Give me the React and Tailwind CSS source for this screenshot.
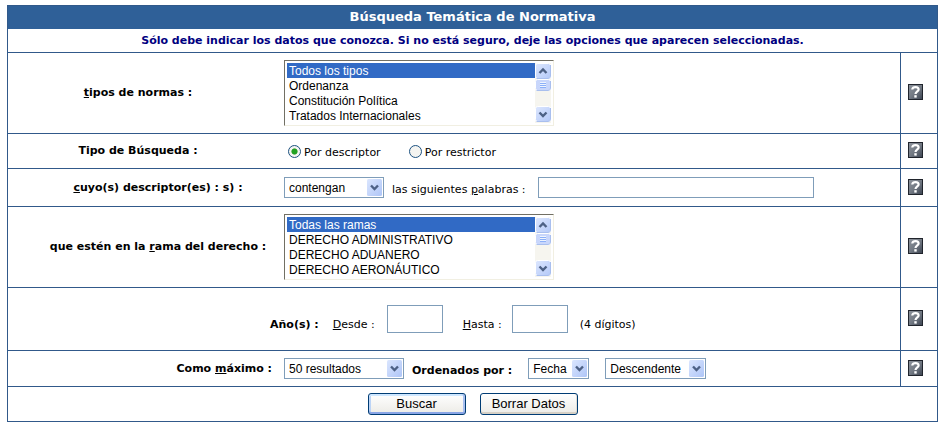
import clsx from "clsx";

const normTypes = [
  "Todos los tipos",
  "Ordenanza",
  "Constitución Política",
  "Tratados Internacionales",
];

const lawBranches = [
  "Todas las ramas",
  "DERECHO ADMINISTRATIVO",
  "DERECHO ADUANERO",
  "DERECHO AERONÁUTICO",
];

function HelpButton({ topic }) {
  return (
    <button type="button" aria-label={`Ayuda: ${topic}`} className="block cursor-pointer">
      <svg width="15" height="16" viewBox="0 0 15 16">
        <defs>
          <linearGradient id="helpFill" x1="0" y1="0" x2="1" y2="1">
            <stop offset="0" stopColor="#8d939c" />
            <stop offset="0.5" stopColor="#737a84" />
            <stop offset="1" stopColor="#3a4250" />
          </linearGradient>
        </defs>
        <rect x="0.5" y="0.5" width="14" height="15" fill="url(#helpFill)" stroke="#20242c" />
        <path
          d="M4.3 5.6C4.3 3.9 5.6 3.1 7.5 3.1C9.4 3.1 10.6 4 10.6 5.5C10.6 7.3 7.7 7.6 7.5 10"
          fill="none"
          stroke="#fff"
          strokeWidth="2.2"
        />
        <rect x="6.3" y="11.2" width="2.4" height="2.4" fill="#fff" />
      </svg>
    </button>
  );
}

// One line of the form, with the help column on the right
function Row({ topic, className, children }) {
  return (
    <div className="flex border-b border-[#31598a]">
      <div className={clsx("flex flex-1", className)}>{children}</div>
      <div className="flex w-[37px] items-center border-l border-[#31598a] pb-0.5 pl-[7px]">
        <HelpButton topic={topic} />
      </div>
    </div>
  );
}

function Label({ htmlFor, className, children }) {
  return (
    <div className={clsx("w-[276px] shrink-0 font-bold", className)}>
      <label htmlFor={htmlFor}>{children}</label>
    </div>
  );
}

function ScrollBar() {
  return (
    <svg width="16" height="60" viewBox="0 0 16 60" aria-hidden="true">
      <defs>
        <linearGradient id="scrollFill" x1="0" y1="0" x2="1" y2="1">
          <stop offset="0" stopColor="#dde7fe" />
          <stop offset="1" stopColor="#b4c9f8" />
        </linearGradient>
      </defs>
      <rect width="16" height="60" fill="#f6f5ef" />
      <rect x="0.5" y="0.5" width="15" height="15" rx="2" fill="url(#scrollFill)" stroke="#fff" />
      <path d="M1.5 15.5H13Q15.5 15.5 15.5 13V2" fill="none" stroke="#a9bfee" />
      <path d="M4.5 10L8 6.5L11.5 10" fill="none" stroke="#4d6185" strokeWidth="2.4" />
      <rect x="0.5" y="16.5" width="15" height="11" rx="2" fill="#c8d6fb" stroke="#fff" />
      <path d="M1.5 27.5H13Q15.5 27.5 15.5 25V18" fill="none" stroke="#a9bfee" />
      <path d="M5 19.5H11M5 21.5H11M5 23.5H11" stroke="#eef4fe" />
      <path d="M5 20.5H11M5 22.5H11M5 24.5H11" stroke="#8cb0f8" />
      <rect x="0.5" y="43.5" width="15" height="15" rx="2" fill="url(#scrollFill)" stroke="#fff" />
      <path d="M1.5 58.5H13Q15.5 58.5 15.5 56V45" fill="none" stroke="#a9bfee" />
      <path d="M4.5 49.5L8 53L11.5 49.5" fill="none" stroke="#4d6185" strokeWidth="2.4" />
    </svg>
  );
}

function ListBox({ id, options }) {
  return (
    <div className="flex h-[66px] w-[270px] border border-t-[#716f64] border-r-[#f1efe2] border-b-[#f1efe2] border-l-[#716f64] p-0.5">
      <select
        id={id}
        size={4}
        defaultValue={options[0]}
        className="h-[60px] flex-1 appearance-none overflow-hidden font-['Liberation_Sans',Arial,sans-serif] text-xs outline-none"
      >
        {options.map((option) => (
          <option
            key={option}
            className="h-[15px] min-h-0 px-0.5 pt-px pb-0 leading-[14px] checked:bg-linear-to-r checked:from-[#316ac5] checked:to-[#316ac5] checked:[-webkit-text-fill-color:#fff]"
          >
            {option}
          </option>
        ))}
      </select>
      <ScrollBar />
    </div>
  );
}

function DropDown({ id, label, value, className }) {
  return (
    <div className={clsx("relative h-[21px] shrink-0", className)}>
      <select
        id={id}
        aria-label={label}
        className="block h-full w-full appearance-none border border-[#7f9db9] bg-white pl-1 font-['Liberation_Sans',Arial,sans-serif] text-xs outline-none"
      >
        <option>{value}</option>
      </select>
      <svg
        width="15"
        height="17"
        viewBox="0 0 15 17"
        aria-hidden="true"
        className="pointer-events-none absolute top-0.5 right-0.5"
      >
        <defs>
          <linearGradient id="dropFill" x1="0" y1="0" x2="1" y2="1">
            <stop offset="0" stopColor="#dbe6fe" />
            <stop offset="1" stopColor="#aec5f7" />
          </linearGradient>
        </defs>
        <rect width="15" height="17" rx="1.5" fill="url(#dropFill)" />
        <path d="M4 6.5L7.5 10L11 6.5" fill="none" stroke="#4d6185" strokeWidth="2.4" />
      </svg>
    </div>
  );
}

function Radio({ id, label, defaultChecked }) {
  return (
    <div className="flex items-center gap-[3px]">
      <input
        id={id}
        type="radio"
        name="searchType"
        defaultChecked={defaultChecked}
        className="size-[13px] appearance-none rounded-full border border-[#1d5281] bg-[#f4f4f1] checked:bg-radial checked:from-[#21a121] checked:from-35% checked:to-[#f4f4f1] checked:to-45%"
      />
      <label htmlFor={id} className="pt-1">
        {label}
      </label>
    </div>
  );
}

const textBox = "border border-[#7f9db9] bg-white px-1 outline-none";
const pushButton =
  "h-[22px] w-[98px] rounded-[3px] border border-[#003c74] bg-linear-to-b from-white to-[#ecebe6] font-['Liberation_Sans',Arial,sans-serif] text-[13px]";

export default function App() {
  return (
    <main className="min-h-screen bg-white pt-[5px] pr-3 pb-1.5 pl-[7px] font-['DejaVu_Sans',Verdana,sans-serif] text-[11px] leading-4 text-black">
      <form className="border border-[#31598a]" onSubmit={(e) => e.preventDefault()}>
        <h1 className="bg-[#2f6098] pt-[3px] pb-1 text-center text-[13px] leading-4 font-bold text-white">
          Búsqueda Temática de Normativa
        </h1>
        <p className="border-b border-[#31598a] pt-1 pb-[3px] text-center font-bold text-[#000080]">
          Sólo debe indicar los datos que conozca. Si no está seguro, deje las opciones que
          aparecen seleccionadas.
        </p>

        <Row topic="tipos de normas" className="items-center py-[7px]">
          <Label htmlFor="types" className="pr-4 text-center">
            <u>t</u>ipos de normas :
          </Label>
          <ListBox id="types" options={normTypes} />
        </Row>

        <Row topic="Tipo de Búsqueda" className="items-center py-[7px]">
          <div className="w-[276px] shrink-0 pr-4 text-center font-bold">Tipo de Búsqueda :</div>
          <div className="flex gap-7 pl-1">
            <Radio id="byDescriptor" label="Por descriptor" defaultChecked />
            <Radio id="byRestrictor" label="Por restrictor" />
          </div>
        </Row>

        <Row topic="descriptores" className="items-center py-2">
          <Label htmlFor="match" className="pl-6 text-center">
            <u>c</u>uyo(s) descriptor(es) : s) :
          </Label>
          <DropDown id="match" value="contengan" className="w-[100px]" />
          <label htmlFor="words" className="pt-1 pr-3 pl-2">
            las siguientes <u>p</u>alabras :
          </label>
          <input id="words" type="text" className={clsx(textBox, "h-[21px] w-[276px]")} />
        </Row>

        <Row topic="rama del derecho" className="items-center py-[7px]">
          <Label htmlFor="branches" className="pl-6 text-center">
            que estén en la <u>r</u>ama del derecho :
          </Label>
          <ListBox id="branches" options={lawBranches} />
        </Row>

        <Row topic="Años" className="items-end pt-[17px] pb-[17px] pl-[262px]">
          <span className="pr-3.5 font-bold">Año(s) :</span>
          <label htmlFor="from" className="pr-3">
            <u>D</u>esde :
          </label>
          <input id="from" type="text" className={clsx(textBox, "h-7 w-14")} />
          <label htmlFor="to" className="pr-2.5 pl-5">
            <u>H</u>asta :
          </label>
          <input id="to" type="text" className={clsx(textBox, "h-7 w-14")} />
          <span className="pl-3">(4 dígitos)</span>
        </Row>

        <Row topic="resultados" className="items-center py-[7px]">
          <Label htmlFor="limit" className="pr-3 text-right">
            Como <u>m</u>áximo :
          </Label>
          <DropDown id="limit" value="50 resultados" className="w-[120px]" />
          <label htmlFor="order" className="pt-1 pr-4 pl-2 font-bold">
            Ordenados por :
          </label>
          <DropDown id="order" value="Fecha" className="w-[61px]" />
          <div className="w-4" />
          <DropDown id="direction" label="Dirección" value="Descendente" className="w-[101px]" />
        </Row>

        <div className="flex justify-center gap-3.5 py-1.5">
          <button
            type="submit"
            className={clsx(
              pushButton,
              "shadow-[inset_0_-2px_0_#89a5e6,inset_-2px_0_0_#a9c0f0,inset_0_2px_0_#cee7ff,inset_2px_0_0_#bcd4f6]"
            )}
          >
            Buscar
          </button>
          <button
            type="reset"
            className={clsx(pushButton, "shadow-[inset_0_-2px_0_#d6d0c5,inset_-1px_0_0_#e2dfd6]")}
          >
            Borrar Datos
          </button>
        </div>
      </form>
    </main>
  );
}
